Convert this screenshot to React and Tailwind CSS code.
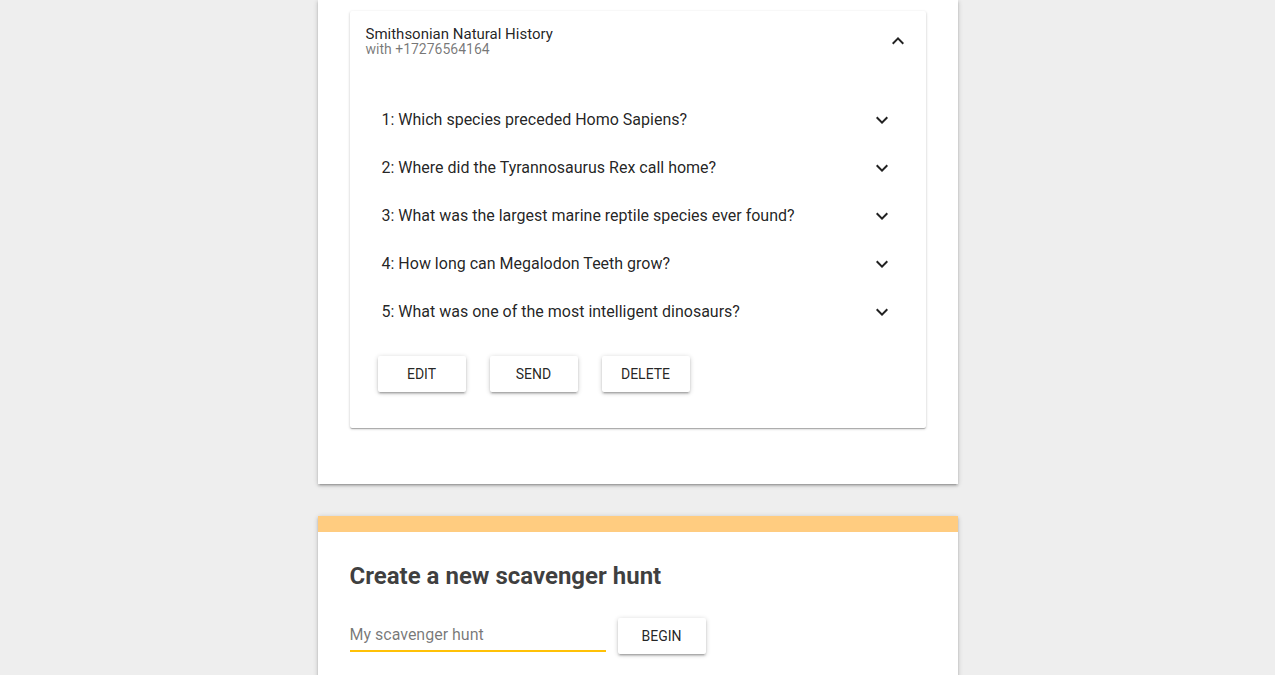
import React from "react";

const Chevron = ({ up }) => (
  <svg width="24" height="24" viewBox="0 0 24 24" className="text-[rgba(0,0,0,0.87)]">
    <path
      fill="currentColor"
      d={up ? "M7.41 15.41L12 10.83l4.59 4.58L18 14l-6-6-6 6z" : "M7.41 8.59L12 13.17l4.59-4.58L18 10l-6 6-6-6z"}
    />
  </svg>
);

const questions = [
  "1: Which species preceded Homo Sapiens?",
  "2: Where did the Tyrannosaurus Rex call home?",
  "3: What was the largest marine reptile species ever found?",
  "4: How long can Megalodon Teeth grow?",
  "5: What was one of the most intelligent dinosaurs?",
];

const Btn = ({ children }) => (
  <button className="w-[88px] h-9 bg-white rounded-[2px] text-[14px] font-normal text-[rgba(0,0,0,0.87)] shadow-[0_1px_5px_0_rgba(0,0,0,0.2),0_2px_2px_0_rgba(0,0,0,0.14),0_3px_1px_-2px_rgba(0,0,0,0.12)]">
    {children}
  </button>
);

export default function App() {
  return (
    <div className="min-h-screen bg-[#eeeeee] flex flex-col items-center font-['Roboto',sans-serif]">
      <div className="w-[640px] bg-white px-8 pt-[11px] pb-14 shadow-[0_1px_5px_0_rgba(0,0,0,0.2),0_2px_2px_0_rgba(0,0,0,0.14),0_3px_1px_-2px_rgba(0,0,0,0.12)]">
        <div className="bg-white rounded-[2px] shadow-[0_1px_3px_0_rgba(0,0,0,0.2),0_1px_1px_0_rgba(0,0,0,0.14),0_2px_1px_-1px_rgba(0,0,0,0.12)] pb-9">
          <div className="flex items-center justify-between pl-4 pr-4 h-[64px]">
            <div className="flex flex-col -mt-[5px]">
              <span className="text-[15px] leading-[16px] text-[rgba(0,0,0,0.87)]">Smithsonian Natural History</span>
              <span className="text-[14px] leading-[14px] text-[rgba(0,0,0,0.54)]">with +17276564164</span>
            </div>
            <div className="-mr-[0px] -mt-[5px]">
              <Chevron up />
            </div>
          </div>
          <div className="px-8 pt-[21px]">
            {questions.map((q) => (
              <div key={q} className="h-12 flex items-center justify-between">
                <span className="text-[16px] text-[rgba(0,0,0,0.87)]">{q}</span>
                <Chevron />
              </div>
            ))}
          </div>
          <div className="flex gap-6 pl-7 mt-[20px]">
            <Btn>EDIT</Btn>
            <Btn>SEND</Btn>
            <Btn>DELETE</Btn>
          </div>
        </div>
      </div>
      <div className="w-[640px] mt-8 bg-white shadow-[0_1px_5px_0_rgba(0,0,0,0.2),0_2px_2px_0_rgba(0,0,0,0.14),0_3px_1px_-2px_rgba(0,0,0,0.12)] pb-10">
        <div className="h-4 bg-[#ffcc80]" />
        <div className="px-8 pt-[28px]">
          <h2 className="text-[24px] leading-[32px] font-bold text-[rgba(0,0,0,0.75)]">Create a new scavenger hunt</h2>
          <div className="flex items-start gap-3 mt-[26px]">
            <div className="w-[256px] border-b-2 border-[#ffc107] pt-[5px] pb-[3px]">
              <span className="block text-[16px] leading-[24px] text-[rgba(0,0,0,0.54)]">My scavenger hunt</span>
            </div>
            <Btn>BEGIN</Btn>
          </div>
        </div>
      </div>
    </div>
  );
}
